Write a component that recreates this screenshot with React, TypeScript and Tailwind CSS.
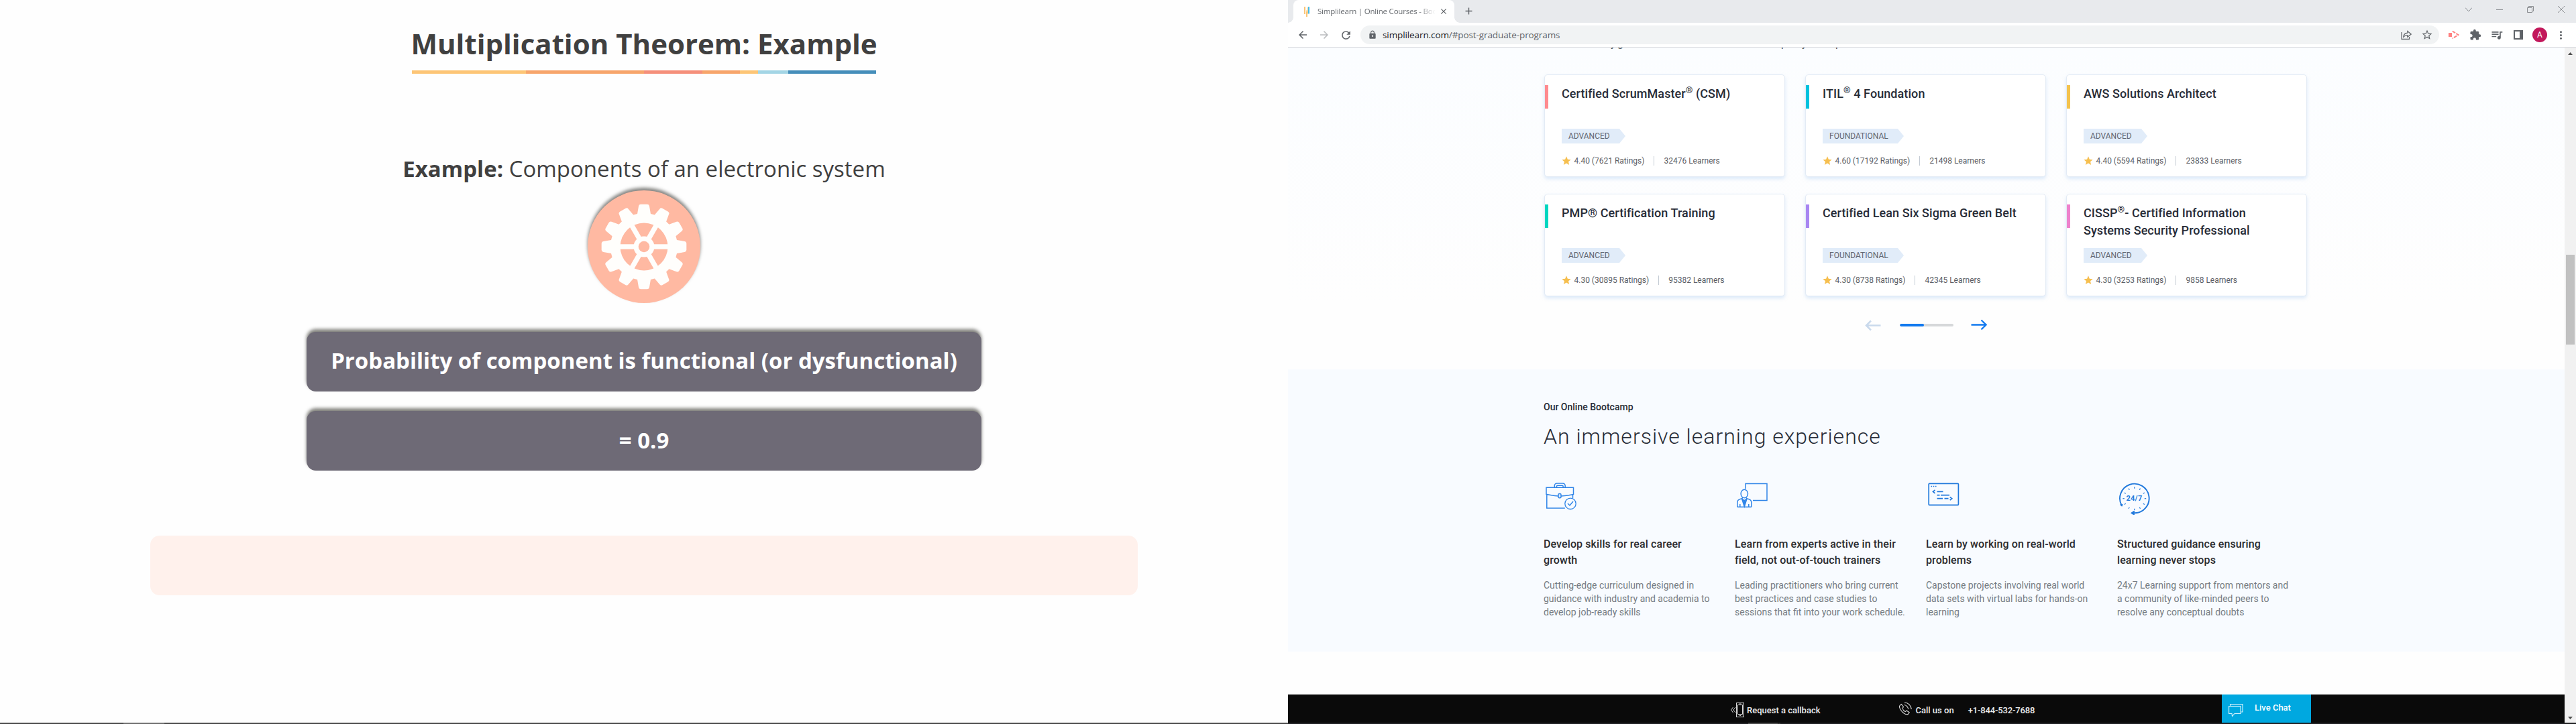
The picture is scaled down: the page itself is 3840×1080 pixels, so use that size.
import type { ReactNode } from "react";
import {
  MdAdd,
  MdArrowBack,
  MdArrowForward,
  MdClose,
  MdExtension,
  MdLock,
  MdMoreVert,
  MdQueueMusic,
  MdRefresh,
  MdStar,
  MdStarOutline,
} from "react-icons/md";

/* ---------- Slide ---------- */

const gearPath = (() => {
  const point = (r: number, deg: number) => {
    const a = (deg * Math.PI) / 180;
    return `${(84 + r * Math.sin(a)).toFixed(2)} ${(84 - r * Math.cos(a)).toFixed(2)}`;
  };
  let d = "";
  for (let k = 0; k < 12; k++) {
    const a = k * 30;
    d += `${k === 0 ? "M" : "L"}${point(50, a - 11.5)}L${point(61, a - 7.5)}Q${point(63.5, a - 7)} ${point(63.5, a - 4.5)}L${point(63.5, a + 4.5)}Q${point(63.5, a + 7)} ${point(61, a + 7.5)}L${point(50, a + 11.5)}`;
  }
  return d + "Z";
})();

function GearBadge() {
  return (
    <div className="mt-2 size-[168px] rounded-full bg-[#ffb9a2] shadow-[0_-4px_5px_rgba(50,50,45,0.6)]">
      <svg viewBox="0 0 168 168" className="size-full">
        <path d={gearPath} fill="#fffefc" />
        <circle cx="84" cy="84" r="35.5" fill="#ffb9a2" />
        {[30, 90, 150].map((angle) => (
          <rect
            key={angle}
            x="80.3"
            y="47"
            width="7.4"
            height="74"
            fill="#fffefc"
            transform={`rotate(${angle} 84 84)`}
          />
        ))}
        <circle cx="84" cy="84" r="15.5" fill="#fffefc" />
        <circle cx="84" cy="84" r="8.3" fill="#ffb9a2" />
      </svg>
    </div>
  );
}

function Slide() {
  return (
    <section className="flex w-[1920px] flex-col items-center bg-[#fefefe] pt-[35px] font-['Open_Sans',sans-serif] text-[#404040]">
      <h1 className="text-[42px] leading-[60px] font-bold whitespace-nowrap">
        Multiplication Theorem: Example
      </h1>
      <div className="mt-[10px] flex h-[5px] w-[692px]">
        <div className="w-[170px] bg-[#fdc576]" />
        <div className="w-[176px] bg-[#f7a56b]" />
        <div className="w-[87px] bg-[#f58f7a]" />
        <div className="w-[56px] bg-[#f7a56b]" />
        <div className="w-[27px] bg-[#fdc576]" />
        <div className="w-[45px] bg-[#a3d5e5]" />
        <div className="flex-1 bg-[#458eba]" />
      </div>
      <p className="mt-[118px] text-[33px] leading-[48px] whitespace-nowrap">
        <b className="font-bold">Example:</b> Components of an electronic system
      </p>
      <GearBadge />
      <div className="mt-[43px] flex h-[89px] w-[1006px] items-center justify-center rounded-[14px] bg-[#6e6a76] pb-[3px] text-[33px] font-bold whitespace-nowrap text-white shadow-[0_-4px_5px_rgba(60,60,52,0.65)]">
        Probability of component is functional (or dysfunctional)
      </div>
      <div className="mt-[29px] flex h-[89px] w-[1006px] items-center justify-center rounded-[14px] bg-[#6e6a76] pb-px text-[33px] font-bold whitespace-nowrap text-white shadow-[0_-4px_5px_rgba(60,60,52,0.65)]">
        = 0.9
      </div>
      <div className="mt-[97px] h-[89px] w-[1472px] rounded-[14px] bg-[#fff1ec]" />
      <div className="mt-auto flex h-0.5 w-full bg-[#4a4a4a]">
        <div className="ml-[184px] w-[61px] bg-[#6e6e6e]" />
      </div>
    </section>
  );
}

/* ---------- Browser chrome ---------- */

function WindowButtons() {
  return (
    <div className="mb-auto ml-auto flex items-center gap-9 pt-[9px] pr-[17px] text-[#8a8d91]">
      <svg viewBox="0 0 10 10" className="size-2.5" fill="none" stroke="currentColor">
        <path d="M0 2.5 5 8l5-5.5" />
      </svg>
      <svg viewBox="0 0 10 10" className="size-2.5" fill="none" stroke="currentColor">
        <path d="M0 5.5h10" />
      </svg>
      <svg viewBox="0 0 10 10" className="size-2.5" fill="none" stroke="currentColor">
        <path d="M.5 2.5h7v7h-7zM2.5 2.5v-2h7v7h-2" />
      </svg>
      <svg viewBox="0 0 10 10" className="size-2.5" fill="none" stroke="currentColor">
        <path d="m0 0 10 10M10 0 0 10" />
      </svg>
    </div>
  );
}

function TabStrip() {
  return (
    <div className="flex h-[34px] items-end bg-[#e8eaed] pl-2 text-[#5f6368]">
      <div className="relative flex h-[34px] w-60 items-center rounded-t-lg bg-white">
        <div className="absolute bottom-0 -left-2 size-2 bg-[radial-gradient(circle_at_0_0,#e8eaed_7.5px,#fff_8px)]" />
        <div className="absolute -right-2 bottom-0 size-2 bg-[radial-gradient(circle_at_100%_0,#e8eaed_7.5px,#fff_8px)]" />
        <svg viewBox="0 0 16 16" className="ml-3 size-4" fill="none">
          <path d="M5 1v11M8 8v8" stroke="#f9bf6b" strokeWidth="1.8" />
          <path d="M8 6v1.5M9.5 2v9.5" stroke="#f9cf90" strokeWidth="1.2" />
          <path d="M11 1v10.5" stroke="#2fb2e6" strokeWidth="1.8" />
        </svg>
        <span className="ml-2 w-[175px] overflow-hidden bg-[linear-gradient(90deg,#5f6368_150px,transparent_176px)] bg-clip-text font-['Open_Sans',sans-serif] text-[11.5px] tracking-[-0.2px] whitespace-nowrap text-transparent">
          Simplilearn | Online Courses - Boo
        </span>
        <MdClose className="ml-1.5 size-[14px]" />
      </div>
      <MdAdd className="mb-[9px] ml-[13px] size-[17px]" />
      <WindowButtons />
    </div>
  );
}

function Toolbar() {
  return (
    <div className="flex h-[37px] items-center border-b border-[#dadce0] bg-white pl-[13px] text-[#5f6368]">
      <MdArrowBack className="size-[18px] shrink-0" />
      <MdArrowForward className="ml-[14px] size-[18px] shrink-0 text-[#babcbe]" />
      <MdRefresh className="ml-[14px] size-[19px] shrink-0" />
      <div className="ml-[12px] flex h-7 w-[1608px] shrink-0 items-center rounded-full bg-[#f1f3f4] font-['Open_Sans',sans-serif]">
        <MdLock className="ml-[11px] size-[14px]" />
        <span className="ml-[8px] text-[13.5px] tracking-[-0.1px] text-[#5f6368]">
          <span className="text-[#202124]">simplilearn.com</span>/#post-graduate-programs
        </span>
        <svg
          viewBox="0 0 16 16"
          className="mr-[14px] ml-auto size-4"
          fill="none"
          stroke="currentColor"
          strokeWidth="1.2"
        >
          <path d="M1 4v10.4h11.5V11" />
          <path d="M3.8 11c.4-4 2.7-5.7 6-5.9V2.5L15.3 7l-5.5 4.3V8.7c-2.8 0-4.6.6-6 2.3Z" />
        </svg>
        <MdStarOutline className="mr-[9px] size-[18px]" />
      </div>
      <svg viewBox="0 0 16 14" className="ml-[14px] h-[14px] w-4">
        <path d="M0 4h5v6H0z" fill="#ff8080" />
        <path d="M5.8 1.5 14.5 7l-8.7 5.5" fill="none" stroke="#ff8080" strokeWidth="2" strokeDasharray="5 1.5" />
      </svg>
      <MdExtension className="ml-[15px] size-[18px]" />
      <MdQueueMusic className="ml-[13px] size-[20px]" />
      <svg viewBox="0 0 14 14" className="ml-[15px] size-[14px]">
        <path d="M1 1h12v12H1z" fill="none" stroke="currentColor" strokeWidth="2" />
        <path d="M9 1h4v12H9z" fill="currentColor" />
      </svg>
      <div className="ml-[14px] flex size-[22px] items-center justify-center rounded-full bg-[#c2185b] font-[Roboto,sans-serif] text-[12px] text-white">
        A
      </div>
      <MdMoreVert className="ml-[11px] size-[19px]" />
    </div>
  );
}

function Scrollbar() {
  return (
    <div className="flex w-[17px] flex-col items-center bg-[#f1f1f1]">
      <svg viewBox="0 0 17 17" className="size-[17px]">
        <path d="M5 11 8.500 7 12 11z" fill="#505050" />
      </svg>
      <div className="mt-[292px] h-[134px] w-[13px] bg-[#c1c1c1]" />
      <svg viewBox="0 0 17 17" className="mt-auto size-[17px]">
        <path d="M5 8 8.500 12 12 8z" fill="#505050" />
      </svg>
    </div>
  );
}

/* ---------- Courses ---------- */

type Course = {
  title: ReactNode;
  level: "ADVANCED" | "FOUNDATIONAL";
  rating: string;
  learners: string;
  stripe: string;
};

const Reg = () => (
  <sup className="relative -top-[0.5em] align-baseline text-[75%] leading-none font-normal">®</sup>
);

const courses: Course[] = [
  {
    title: <>Certified ScrumMaster<Reg /> (CSM)</>,
    level: "ADVANCED",
    rating: "4.40 (7621 Ratings)",
    learners: "32476 Learners",
    stripe: "bg-[#ff8a8f]",
  },
  {
    title: <>ITIL<Reg /> 4 Foundation</>,
    level: "FOUNDATIONAL",
    rating: "4.60 (17192 Ratings)",
    learners: "21498 Learners",
    stripe: "bg-[#00c2de]",
  },
  {
    title: <>AWS Solutions Architect</>,
    level: "ADVANCED",
    rating: "4.40 (5594 Ratings)",
    learners: "23833 Learners",
    stripe: "bg-[#f4c34d]",
  },
  {
    title: <>PMP® Certification Training</>,
    level: "ADVANCED",
    rating: "4.30 (30895 Ratings)",
    learners: "95382 Learners",
    stripe: "bg-[#00d6c0]",
  },
  {
    title: <>Certified Lean Six Sigma Green Belt</>,
    level: "FOUNDATIONAL",
    rating: "4.30 (8738 Ratings)",
    learners: "42345 Learners",
    stripe: "bg-[#a886f2]",
  },
  {
    title: (
      <>
        CISSP<Reg />- Certified Information
        <br />
        Systems Security Professional
      </>
    ),
    level: "ADVANCED",
    rating: "4.30 (3253 Ratings)",
    learners: "9858 Learners",
    stripe: "bg-[#ee82cd]",
  },
];

function CourseCard({ course }: { course: Course }) {
  return (
    <article className="flex h-[153px] rounded-[5px] border border-[#e3ebf5] bg-white shadow-[0_3px_5px_rgba(190,215,245,0.5)]">
      <div className={`mt-[15px] h-[35px] w-[5px] ${course.stripe}`} />
      <div className="ml-5 flex flex-col items-start pt-[15px]">
        <h3 className="h-[65px] text-[18px] leading-[26px] font-medium tracking-[0.08px] whitespace-nowrap text-[#272c37]">
          {course.title}
        </h3>
        <div
          className={`flex h-[22px] items-center bg-[#e1ecf9] pl-2.5 text-[12px] text-[#5f6570] [clip-path:polygon(0_0,calc(100%_-_9px)_0,100%_50%,calc(100%_-_9px)_100%,0_100%)] ${
            course.level === "ADVANCED" ? "w-[95px]" : "w-[121px]"
          }`}
        >
          {course.level}
        </div>
        <div className="mt-[18px] flex h-4 items-center text-[12px] leading-4 whitespace-nowrap text-[#5b5e66]">
          <MdStar className="-ml-px size-4 shrink-0 text-[#f6bf4f]" />
          <span className="ml-[3.5px]">{course.rating}</span>
          <span className="ml-[14px] h-[14px] w-px bg-[#c3cad3]" />
          <span className="ml-[14px]">{course.learners}</span>
        </div>
      </div>
    </article>
  );
}

function Courses() {
  return (
    <div className="flex h-[480px] flex-col bg-[linear-gradient(180deg,#fbfdff,#fefefe_80%)]">
      <div className="flex h-1 overflow-hidden text-[16px] text-[#4a4f59]">
        <div className="-mt-4 ml-[481px] flex leading-5">
          <span className="w-2.5">y</span>
          <span className="w-[244px]">g</span>
          <span className="w-[31px]">p</span>
          <span className="w-[50px]">y</span>
          <span>p</span>
        </div>
      </div>
      <div className="mt-9 ml-[382px] grid w-[1137px] grid-cols-3 gap-x-[30px] gap-y-[25px]">
        {courses.map((course, i) => (
          <CourseCard key={i} course={course} />
        ))}
      </div>
      <div className="mt-[33px] ml-[860px] flex h-5 items-center">
        <svg viewBox="0 0 24 20" className="h-5 w-6" fill="none" stroke="#c9d9ec" strokeWidth="2.5">
          <path d="M23.500 10.500H2M9 3.500 2 10.500l7 7" />
        </svg>
        <div className="ml-7 h-1 w-20 overflow-hidden rounded-full bg-[#d6d8da]">
          <div className="h-full w-9 rounded-full bg-[#1179ef]" />
        </div>
        <svg viewBox="0 0 24 20" className="ml-[26px] h-5 w-6" fill="none" stroke="#1179ef" strokeWidth="2.3">
          <path d="M.5 9.500h22M15.500 2.500l7 7-7 7" />
        </svg>
      </div>
    </div>
  );
}

/* ---------- Bootcamp ---------- */

function BriefcaseIcon() {
  return (
    <svg viewBox="0 0 50 50" className="size-[50px]" fill="none" stroke="#3085e8" strokeWidth="1.5">
      <path d="M15.300 11V8.500a3.500 3.500 0 0 1 3.500-3.500h8.900a3.500 3.500 0 0 1 3.500 3.500V11M18.500 11V9.500c0-.8.5-1.300 1.200-1.300h7.200c.7 0 1.200.5 1.200 1.300V11" />
      <path d="M3 11.300h40.500v10.200c-5 1.200-10.500 2-18 2.500h-4.500c-6.500-.5-12.500-1.200-18-2.700zM3.800 21.500V42h27" />
      <path d="M42.500 22v5.500" />
      <rect x="21" y="20.500" width="4" height="6.300" rx="1.5" fill="#dcebfd" />
      <circle cx="39" cy="35.300" r="8.200" strokeWidth="1.3" />
      <path d="m35 35 3 3 5-6" />
    </svg>
  );
}

function ExpertIcon() {
  return (
    <svg viewBox="0 0 50 50" className="size-[50px]" fill="none" stroke="#3085e8" strokeWidth="1.5">
      <path d="M15 13V5.500h32V30.500H26" />
      <ellipse cx="13.300" cy="20.500" rx="5.200" ry="6.200" />
      <path d="M2.800 40.300v-7c0-3 2-4.600 6.700-5.500l1.500-1.500M23.800 40.300v-7c0-3-2-4.600-6.700-5.500l-1.500-1.500M2.800 40.300h21M6.800 40v-4M19.800 40v-4M9.500 27.800l3.800 12 3.800-12M9.500 27.800l3.800 3 3.800-3M13.300 31v8" />
      <path d="m11.800 30.500 1.500 8 1.500-8z" fill="#3085e8" />
    </svg>
  );
}

function CodeIcon() {
  return (
    <svg viewBox="0 0 50 50" className="size-[50px]" fill="none" stroke="#2179dc" strokeWidth="1.7">
      <rect x="3.200" y="5.300" width="44.200" height="32" rx="1" />
      <path d="M6.500 9.500h1.600M9.700 9.500h1.600M12.900 9.500h1.600" />
      <path d="m12.500 15-3 2.400 3 2.400M15.500 17.400h9M15.500 22.600h4M21 22.600h13M15.500 27.700h8.500M26.500 27.700h6M34.700 25.300l3 2.400-3 2.400" />
    </svg>
  );
}

function ClockIcon() {
  return (
    <svg viewBox="0 0 50 52" className="h-[52px] w-[50px]" fill="none" stroke="#2179dc" strokeWidth="1.9">
      <path d="M6 38.500A21.800 21.800 0 1 1 24.500 49.300" />
      <path d="M3.500 36.500 6 38.800l1.500-2.800" strokeWidth="1.2" />
      <path d="m19.500 49.300 5-3.300v6.500z" fill="#2179dc" strokeWidth="0.8" />
      {[0, 1, 2, 3, 4, 5, 6, 7, 8, 9, 10, 11].map((n) => (
        <path key={n} d="M24.800 10.300v2.400" strokeWidth="1.2" transform={`rotate(${n * 30} 24.8 27.7)`} />
      ))}
      <text
        x="24.5"
        y="31.3"
        textAnchor="middle"
        fontFamily="Roboto, sans-serif"
        fontSize="11"
        fontWeight="700"
        letterSpacing="0.3"
        fill="#2179dc"
        stroke="none"
      >
        24/7
      </text>
    </svg>
  );
}

const features = [
  {
    icon: <BriefcaseIcon />,
    title: ["Develop skills for real career", "growth"],
    text: ["Cutting-edge curriculum designed in", "guidance with industry and academia to", "develop job-ready skills"],
  },
  {
    icon: <ExpertIcon />,
    title: ["Learn from experts active in their", "field, not out-of-touch trainers"],
    text: ["Leading practitioners who bring current", "best practices and case studies to", "sessions that fit into your work schedule."],
  },
  {
    icon: <CodeIcon />,
    title: ["Learn by working on real-world", "problems"],
    text: ["Capstone projects involving real world", "data sets with virtual labs for hands-on", "learning"],
  },
  {
    icon: <ClockIcon />,
    title: ["Structured guidance ensuring", "learning never stops"],
    text: ["24x7 Learning support from mentors and", "a community of like-minded peers to", "resolve any conceptual doubts"],
  },
];

function Bootcamp() {
  return (
    <div className="flex h-[421px] flex-col bg-[#f8fbff] pt-[46px] pl-[381px]">
      <p className="text-[14px] leading-5 font-medium text-[#272c37]">Our Online Bootcamp</p>
      <h2 className="mt-[14px] text-[32px] leading-10 font-light tracking-[1px] text-[#272c37]">
        An immersive learning experience
      </h2>
      <div className="mt-[45px] grid w-[1140px] grid-cols-4">
        {features.map((feature) => (
          <div key={feature.title[0]} className="flex flex-col whitespace-nowrap">
            <div className="h-[84px] pl-px">{feature.icon}</div>
            <h3 className="text-[16px] leading-6 font-medium tracking-[0.1px] text-[#2b2b2e]">
              {feature.title.map((line) => (
                <span key={line} className="block">{line}</span>
              ))}
            </h3>
            <p className="mt-[15px] text-[14px] leading-5 text-[#757b82]">
              {feature.text.map((line) => (
                <span key={line} className="block">{line}</span>
              ))}
            </p>
          </div>
        ))}
      </div>
    </div>
  );
}

/* ---------- Contact bar ---------- */

function ContactBar() {
  return (
    <div className="mt-auto flex h-[42px] bg-[#0a0a0a] text-[13px] leading-5 font-medium whitespace-nowrap text-[#ececec]">
      <div className="ml-[660px] flex w-[254px] items-start pt-3">
        <svg viewBox="0 0 20 22" className="h-[22px] w-5" fill="none" stroke="#d8d8d8" strokeWidth="1">
          <path d="m3.500 7-3 4 3 4M7 7l-3 4 3 4" />
          <rect x="8.5" y="0.5" width="11" height="21" />
          <path d="M10.500 3.500h7v14h-7zM12.500 2h3M13 19.500h2" />
        </svg>
        <span className="ml-[4px] pt-0.5">Request a callback</span>
      </div>
      <div className="flex w-[478px] items-start pt-[11px]">
        <svg viewBox="0 0 20 20" className="-ml-[4px] h-5 w-5" fill="none" stroke="#d8d8d8" strokeWidth="1.1">
          <path d="M2.500 5 4.500 3.500l3 4L6 9.500c.5 2.300 2 4 4.200 5.200l2-1.700 4 2.700-1.400 2.300c-1.800 1.200-4.500.8-7-1.200C4 14 1 9 1.500 6.500z" />
          <path d="M8.500 4.500c3 .3 6 3 6.200 6.500M9 1c5.500.2 9.800 4.300 10.300 10" />
        </svg>
        <span className="ml-[5.5px] pt-[3px]">Call us on</span>
        <span className="ml-[21px] pt-[3px] tracking-[-0.15px]">+1-844-532-7688</span>
      </div>
      <div className="flex w-[133px] items-start bg-[#00a8e0] pt-2.5 text-white">
        <svg viewBox="0 0 22 20" className="mt-[3px] ml-2.5 h-5 w-[22px]" fill="none" stroke="#d6f2fc" strokeWidth="1.1">
          <path d="M.6 4.500H18v11H9l-3.500 4-.5-4H.6z" />
          <path d="M2.500 4V1.500h18.500V13H18.500" />
        </svg>
        <span className="ml-[17px]">Live Chat</span>
      </div>
    </div>
  );
}

function Browser() {
  return (
    <section className="flex w-[1920px] flex-col bg-white font-[Roboto,sans-serif]">
      <TabStrip />
      <Toolbar />
      <div className="flex flex-1">
        <main className="flex w-[1903px] flex-col bg-[#fefefe]">
          <Courses />
          <Bootcamp />
          <ContactBar />
        </main>
        <Scrollbar />
      </div>
      <div className="flex h-0.5 bg-[#202123]">
        <div className="ml-[686px] w-11 bg-[#4b4b4b]" />
        <div className="ml-px w-[3px] bg-[#3a3a3a]" />
      </div>
    </section>
  );
}

export default function App() {
  return (
    <div className="flex h-[1080px] w-[3840px] overflow-hidden">
      <Slide />
      <Browser />
    </div>
  );
}
